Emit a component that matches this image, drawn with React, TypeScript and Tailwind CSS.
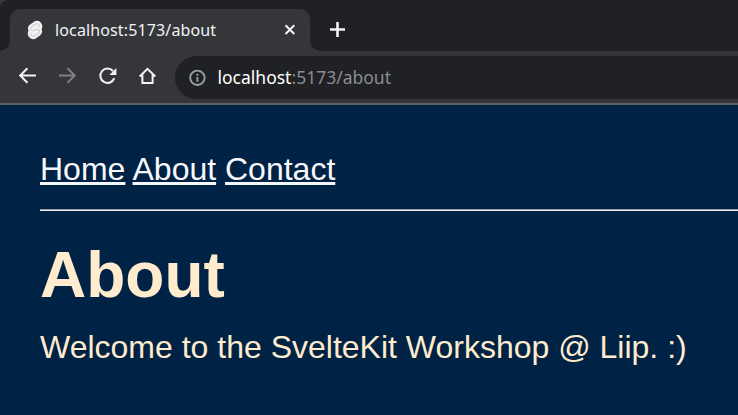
function SvelteMark() {
  return (
    <svg width="16" height="20" viewBox="0 0 16 20" className="shrink-0">
      <path
        d="M7 1.8 3.1 4.6C1 6.1.4 8.6 1.5 10.7C.4 12.6.5 15 1.9 16.8C3.7 19.4 6.7 19.8 9.1 18.2L13 15.4C15.1 13.9 15.7 11.4 14.6 9.3C15.7 7.4 15.6 5 14.2 3.2C12.4.6 9.4.2 7 1.8Z"
        fill="#f1f1f1"
      />
      <path
        d="M12.3 6.6C12.5 4 9.9 2.9 8 4.2L4.7 6.5C2.9 7.9 3.7 10.8 6.2 10.5L9.9 9.5C12.4 9.2 13.2 12.1 11.4 13.5L8.1 15.8C6.2 17.1 3.6 16 3.8 13.4"
        fill="none"
        stroke="#cfcfcf"
        strokeWidth="1.2"
        strokeLinecap="round"
      />
    </svg>
  );
}

function Tab() {
  return (
    <div className="relative flex h-[42px] w-[300px] items-center rounded-t-[10px] bg-[#35363a] pl-[17px] pr-[14px]">
      <svg className="absolute -left-[10px] bottom-0" width="10" height="10">
        <path d="M10 0V10H0A10 10 0 0 0 10 0Z" fill="#35363a" />
      </svg>
      <svg className="absolute -right-[10px] bottom-0" width="10" height="10">
        <path d="M0 0V10H10A10 10 0 0 1 0 0Z" fill="#35363a" />
      </svg>
      <SvelteMark />
      <span className="ml-3 flex-1 whitespace-nowrap text-[16px] leading-6 tracking-[0.13px] text-[#f1f3f4]">
        localhost:5173/about
      </span>
      <svg width="12" height="12" viewBox="0 0 12 12" fill="none" stroke="#f1f3f4" strokeWidth="2">
        <path d="M1.5 1.2 10.3 10M10.3 1.2 1.5 10" />
      </svg>
    </div>
  );
}

function Toolbar() {
  return (
    <div className="flex h-[52px] items-start bg-[#35363a] pl-[18px] pt-[5px]">
      <div className="flex h-10 shrink-0 items-center gap-5">
        <svg width="20" height="20" viewBox="0.3 0.5 20 20" fill="none" stroke="#f1f3f4" strokeWidth="2">
          <path d="M18.2 10H3M9.7 2.8 2.5 10l7.2 7.2" />
        </svg>
        <svg width="20" height="20" viewBox="0.3 0.5 20 20" fill="none" stroke="#808184" strokeWidth="2">
          <path d="M1.3 10H17M9.8 2.8 17 10l-7.2 7.2" />
        </svg>
        <svg width="20" height="20" viewBox="0.3 0.3 20 20">
          <path d="M16.6 12.5A7.2 7.2 0 1 1 15.3 5.3" fill="none" stroke="#f1f3f4" strokeWidth="2" />
          <path d="M18.7 2.2V9.2H11.7Z" fill="#f1f3f4" />
        </svg>
        <svg width="20" height="20" viewBox="0.5 0.4 20 20" fill="none" stroke="#f1f3f4" strokeWidth="2">
          <path d="M2.2 10.9 10 3.2l7.8 7.7M4.9 8.9V17.3H15.1V8.9" />
        </svg>
      </div>
      <div className="ml-[17px] flex h-[43px] flex-1 items-center rounded-l-full bg-[#202124] pl-[14px]">
        <svg width="18" height="18" viewBox="0.6 0.2 18 18" fill="none" stroke="#9aa0a6" strokeWidth="1.9">
          <circle cx="9" cy="9" r="7.2" />
          <path d="M9 8.2v4.8M9 5v1.9" />
        </svg>
        <span className="mb-0.5 ml-[10.5px] whitespace-nowrap text-[17.5px] leading-6 text-[#8b8d90]">
          <span className="text-white">localhost</span>:5173/about
        </span>
      </div>
    </div>
  );
}

const links = ["Home", "About", "Contact"];

export default function App() {
  return (
    <div className="flex h-[415px] w-[738px] flex-col overflow-hidden bg-[#002244]">
      <header className="border-b-2 border-[#5f6063] bg-[#3a3d40] font-['Noto_Sans',sans-serif]">
        <div className="flex h-[51px] items-end rounded-tl-[8px] bg-[#202124] pl-[10px]">
          <Tab />
          <svg className="mb-[13px] ml-[19px]" width="17" height="17" viewBox="0 0 17 17" fill="none" stroke="#f1f3f4" strokeWidth="2.6">
            <path d="M8.5 1v15M1 8.5h15" />
          </svg>
        </div>
        <Toolbar />
      </header>
      <main className="flex-1 pl-10 pt-[46px] font-['Liberation_Sans',Arial,sans-serif] text-[32px] leading-[37px] text-[#ffebcd]">
        <nav className="whitespace-nowrap text-[#f8f8fc]">
          {links.map((label, i) => (
            <span key={label}>
              {i > 0 && " "}
              <a href="#" className="underline">{label}</a>
            </span>
          ))}
        </nav>
        <hr className="mt-[21px] h-[2px] border-t border-b border-t-[#9a9a9a] border-b-[#eeeeee]" />
        <h1 className="mt-[28px] text-[64px] font-bold leading-[73px]">About</h1>
        <p className="mt-[17px] whitespace-nowrap">Welcome to the SvelteKit Workshop @ Liip. :)</p>
      </main>
    </div>
  );
}
